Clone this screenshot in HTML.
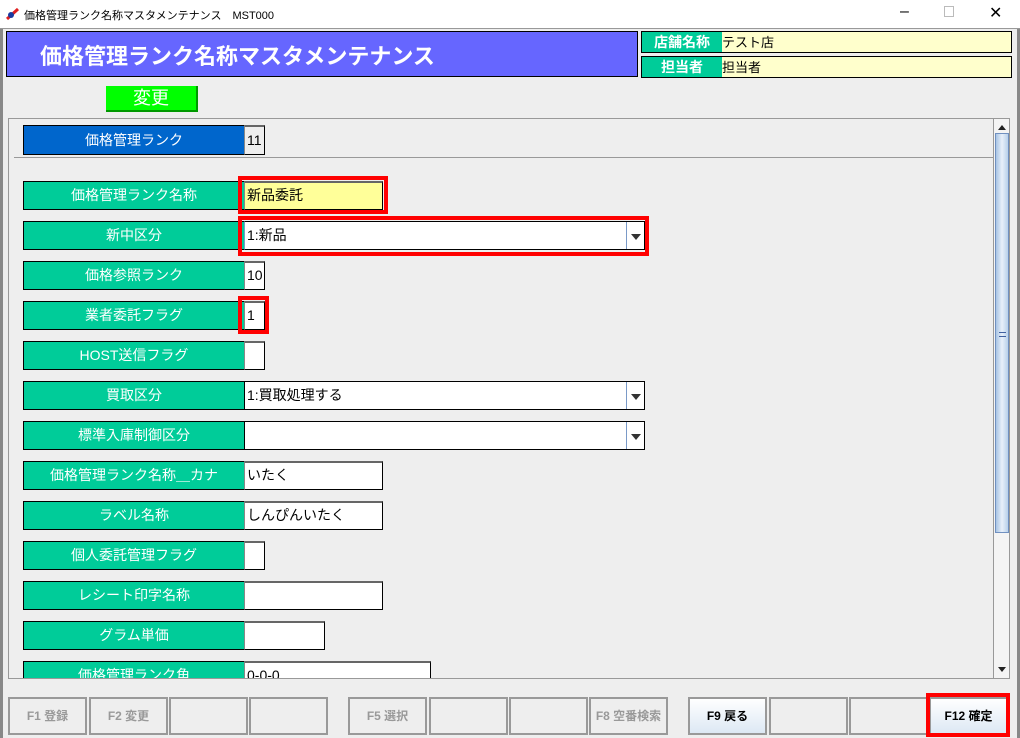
<!DOCTYPE html>
<html><head><meta charset="utf-8"><style>
*{box-sizing:border-box;margin:0;padding:0}
body{width:1020px;height:738px;overflow:hidden;background:#eeeeee;font-family:"Liberation Sans","Noto Sans CJK JP",sans-serif;position:relative}
.a{position:absolute}
.title{left:0;top:0;width:1020px;height:29px;background:#fff;border-bottom:1px solid #999;font-size:12px}
.lbl{background:#00cc99;color:#fff;font-size:14px;text-align:center;border:1px solid #000;border-right:none}
.fld{background:#fff;border:1px solid #000;font-size:14px;padding-left:2px;color:#000}
.fld.in{border-left:1px solid #888;border-top:2px solid #666}
.red{border:4px solid #f00}
.btn{top:697px;height:38px;width:79px;border:2px solid #999;background:#eee;color:#999;font-size:12px;font-weight:bold;text-align:center;line-height:34px}
.cb{background:#fff;border:1px solid #000;font-size:14px;padding-left:2px}
.arr{position:absolute;right:0;top:0;width:18px;height:100%;border-left:1px solid #7a9ac8;background:#fff}
.arr:after{content:"";position:absolute;left:4px;top:12px;border-left:5px solid transparent;border-right:5px solid transparent;border-top:6px solid #333}
</style></head><body>
<div class="a title">
 <svg class="a" style="left:5px;top:7px" width="16" height="14"><path d="M2 12 L13 2" stroke="#e02020" stroke-width="3"/><circle cx="6" cy="8" r="3" fill="#1a3aa0"/></svg>
 <span class="a" style="left:24px;top:7px;font-size:11px">価格管理ランク名称マスタメンテナンス　MST000</span>
 <span class="a" style="left:900px;top:3px;font-size:16px">–</span>
 <span class="a" style="left:944px;top:6px;width:10px;height:11px;border:1px solid #bbb"></span>
 <span class="a" style="left:989px;top:3px;font-size:16px">✕</span>
</div>
<div class="a" style="left:0;top:29px;width:3px;height:709px;background:#888"></div>
<div class="a" style="left:1017px;top:29px;width:3px;height:709px;background:#888"></div>
<div class="a" style="left:6px;top:31px;width:632px;height:46px;background:#6666ff;border:1px solid #000;color:#fff;font-size:22px;font-weight:bold;padding:7px 0 0 33px">価格管理ランク名称マスタメンテナンス</div>
<div class="a" style="left:641px;top:31px;width:371px;height:22px;border:1px solid #000;background:#ffffcc;font-size:13px"><span style="display:inline-block;width:80px;height:20px;background:#00cc99;color:#fff;font-weight:bold;text-align:center;font-size:14px;line-height:20px">店舗名称</span>テスト店</div>
<div class="a" style="left:641px;top:56px;width:371px;height:22px;border:1px solid #000;background:#ffffcc;font-size:13px"><span style="display:inline-block;width:80px;height:20px;background:#00cc99;color:#fff;font-weight:bold;text-align:center;font-size:14px;line-height:20px">担当者</span>担当者</div>
<div class="a" style="left:106px;top:86px;width:92px;height:26px;background:#00ff00;border-bottom:2px solid #009900;border-right:2px solid #009900;color:#fff;font-size:18px;text-align:center;line-height:24px">変更</div>

<div class="a" style="left:8px;top:118px;width:1002px;height:561px;border:1px solid #999;overflow:hidden">
 <div class="a" style="left:5px;top:38px;width:980px;height:1px;background:#999"></div>
 <div class="a" style="left:984px;top:0;width:17px;height:559px;background:#f4f4f4;border-left:1px solid #999">
  <div class="a" style="left:4px;top:6px;border-left:4px solid transparent;border-right:4px solid transparent;border-bottom:5px solid #222"></div>
  <div class="a" style="left:1px;top:14px;width:14px;height:400px;background:linear-gradient(90deg,#a8c4e4,#e8f0fa,#b8d0ea);border:1px solid #7090c0"><div class="a" style="left:3px;top:198px;width:7px;height:5px;border-top:1px solid #4060a0;border-bottom:1px solid #4060a0"></div></div>
  <div class="a" style="left:4px;top:548px;border-left:4px solid transparent;border-right:4px solid transparent;border-top:5px solid #222"></div>
 </div>
</div>
<div class="a lbl" style="left:23px;top:125px;width:221px;height:30px;background:#0066cc;line-height:28px">価格管理ランク</div>
<div class="a fld in" style="left:244px;top:125px;width:21px;height:30px;line-height:26px;background:#eee">11</div>

<div style="position:absolute;left:0;top:0;width:1020px;height:678px;overflow:hidden">
<div class="a lbl" style="left:23px;top:181px;width:221px;height:29px;line-height:27px">価格管理ランク名称</div>
<div class="a fld in" style="left:244px;top:181px;width:139px;height:29px;line-height:25px;background:#ffff99">新品委託</div>
<div class="a red" style="left:238px;top:176px;width:150px;height:38px"></div>

<div class="a lbl" style="left:23px;top:221px;width:221px;height:29px;line-height:27px">新中区分</div>
<div class="a cb" style="left:244px;top:221px;width:401px;height:29px;line-height:27px;border-left:1px solid #7a9ac8">1:新品<div class="arr"></div></div>
<div class="a red" style="left:238px;top:216px;width:411px;height:40px"></div>

<div class="a lbl" style="left:23px;top:261px;width:221px;height:29px;line-height:27px">価格参照ランク</div>
<div class="a fld in" style="left:244px;top:261px;width:21px;height:29px;line-height:25px">10</div>

<div class="a lbl" style="left:23px;top:301px;width:221px;height:29px;line-height:27px">業者委託フラグ</div>
<div class="a fld in" style="left:244px;top:301px;width:21px;height:29px;line-height:25px">1</div>
<div class="a red" style="left:238px;top:296px;width:31px;height:38px"></div>

<div class="a lbl" style="left:23px;top:341px;width:221px;height:29px;line-height:27px">HOST送信フラグ</div>
<div class="a fld in" style="left:244px;top:341px;width:21px;height:29px"></div>

<div class="a lbl" style="left:23px;top:381px;width:221px;height:29px;line-height:27px">買取区分</div>
<div class="a cb" style="left:244px;top:381px;width:401px;height:29px;line-height:27px">1:買取処理する<div class="arr"></div></div>

<div class="a lbl" style="left:23px;top:421px;width:221px;height:29px;line-height:27px">標準入庫制御区分</div>
<div class="a cb" style="left:244px;top:421px;width:401px;height:29px"><div class="arr"></div></div>

<div class="a lbl" style="left:23px;top:461px;width:221px;height:29px;line-height:27px">価格管理ランク名称＿カナ</div>
<div class="a fld in" style="left:244px;top:461px;width:139px;height:29px;line-height:25px">いたく</div>

<div class="a lbl" style="left:23px;top:501px;width:221px;height:29px;line-height:27px">ラベル名称</div>
<div class="a fld in" style="left:244px;top:501px;width:139px;height:29px;line-height:25px">しんぴんいたく</div>

<div class="a lbl" style="left:23px;top:541px;width:221px;height:29px;line-height:27px">個人委託管理フラグ</div>
<div class="a fld in" style="left:244px;top:541px;width:21px;height:29px"></div>

<div class="a lbl" style="left:23px;top:581px;width:221px;height:29px;line-height:27px">レシート印字名称</div>
<div class="a fld in" style="left:244px;top:581px;width:139px;height:29px"></div>

<div class="a lbl" style="left:23px;top:621px;width:221px;height:29px;line-height:27px">グラム単価</div>
<div class="a fld in" style="left:244px;top:621px;width:81px;height:29px"></div>

<div class="a lbl" style="left:23px;top:661px;width:221px;height:29px;line-height:27px">価格管理ランク角</div>
<div class="a fld in" style="left:244px;top:661px;width:187px;height:29px;line-height:25px">0-0-0</div>
</div>
<div class="a" style="left:8px;top:678px;width:1002px;height:1px;background:#999"></div>

<div class="a btn" style="left:8px">F1 登録</div>
<div class="a btn" style="left:89px">F2 変更</div>
<div class="a btn" style="left:169px"></div>
<div class="a btn" style="left:249px"></div>
<div class="a btn" style="left:348px">F5 選択</div>
<div class="a btn" style="left:429px"></div>
<div class="a btn" style="left:509px"></div>
<div class="a btn" style="left:589px">F8 空番検索</div>
<div class="a btn" style="left:688px;color:#000;background:linear-gradient(#fff,#dde8f4)">F9 戻る</div>
<div class="a btn" style="left:769px"></div>
<div class="a btn" style="left:849px"></div>
<div class="a btn" style="left:929px;color:#000;background:linear-gradient(#fff,#dde8f4)">F12 確定</div>
<div class="a red" style="left:926px;top:693px;width:84px;height:44px"></div>
</body></html>
